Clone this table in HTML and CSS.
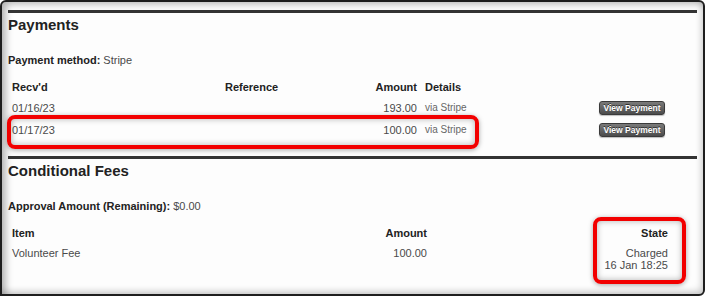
FILE: index.html
```html
<!DOCTYPE html>
<html lang="en">
<head>
<meta charset="utf-8">
<title>Payments</title>
<link rel="stylesheet" href="styles.css">
</head>
<body>
<div class="frame">
  <section class="panel">
    <h2 class="panel-title">Payments</h2>
    <p class="field"><strong>Payment method:</strong> Stripe</p>
    <div class="pay-table">
      <div class="row head">
        <span>Recv'd</span>
        <span>Reference</span>
        <span class="num">Amount</span>
        <span class="details">Details</span>
        <span></span>
      </div>
      <div class="row">
        <span>01/16/23</span>
        <span></span>
        <span class="num">193.00</span>
        <span class="details via">via Stripe</span>
        <span><button class="btn">View Payment</button></span>
      </div>
      <div class="row">
        <span>01/17/23</span>
        <span></span>
        <span class="num">100.00</span>
        <span class="details via">via Stripe</span>
        <span><button class="btn">View Payment</button></span>
      </div>
    </div>
  </section>

  <section class="panel">
    <h2 class="panel-title">Conditional Fees</h2>
    <p class="field"><strong>Approval Amount (Remaining):</strong> $0.00</p>
    <div class="fee-table">
      <div class="row head">
        <span>Item</span>
        <span class="num">Amount</span>
        <span class="num">State</span>
      </div>
      <div class="row tight">
        <span>Volunteer Fee</span>
        <span class="num">100.00</span>
        <span class="num">Charged<br>16 Jan 18:25</span>
      </div>
    </div>
  </section>

  <div class="callout callout-payment"></div>
  <div class="callout callout-state"></div>
</div>
</body>
</html>
```

FILE: styles.css
```css
* { box-sizing: border-box; }

html, body {
  margin: 0;
  padding: 0;
  background: #ffffff;
}

body {
  font-family: "Liberation Sans", Arial, sans-serif;
  font-size: 11px;
  color: #4a4a4a;
}

.frame {
  position: relative;
  width: 705px;
  height: 296px;
  border: 2px solid #1e1e1e;
  border-radius: 6px 6px 6px 0;
  padding: 8px 6px 0 6px;
  background: #fdfdfd;
  box-shadow: inset 5px 3px 7px -1px rgba(0, 0, 0, 0.28),
              inset -3px -4px 6px -1px rgba(0, 0, 0, 0.18);
  overflow: hidden;
}

.panel {
  border-top: 3px solid #333;
}

.panel + .panel {
  margin-top: 15px;
}

.panel-title {
  margin: 3px 0 0 0;
  font-size: 15px;
  line-height: 18px;
  font-weight: bold;
  color: #222;
}

.field {
  margin: 19px 0 0 0;
  line-height: 14px;
}

.field strong {
  color: #222;
}

.pay-table,
.fee-table {
  margin-top: 10px;
}

.row {
  display: grid;
  align-items: center;
  height: 22px;
  line-height: 14px;
}

.row.head {
  height: 20px;
  font-weight: bold;
  color: #222;
}

.pay-table .row {
  grid-template-columns: 213px 136px 56px 182px 66px;
  padding-left: 4px;
}

.fee-table .row {
  grid-template-columns: 315px 100px 241px;
  padding-left: 4px;
}

.fee-table .row.tight {
  height: auto;
  align-items: start;
  padding-top: 4px;
  line-height: 12px;
}

.num {
  text-align: right;
}

.details {
  padding-left: 8px;
}

.via {
  font-size: 10px;
  color: #666;
}

.btn {
  display: block;
  width: 66px;
  height: 14px;
  padding: 0;
  border: 1px solid #3a3a3a;
  border-radius: 3px;
  background: linear-gradient(#7a7a7a, #4c4c4c);
  color: #fff;
  font-family: "Liberation Sans", Arial, sans-serif;
  font-size: 8.5px;
  font-weight: bold;
  line-height: 12px;
  text-shadow: 0 -1px 0 rgba(0, 0, 0, 0.6);
  box-shadow: 0 1px 1px rgba(0, 0, 0, 0.25);
}

/* red annotation outlines drawn over the content */
.callout {
  position: absolute;
  border: 4px solid #f20000;
  border-radius: 8px;
  box-shadow: 0 1px 5px rgba(0, 0, 0, 0.35),
              inset 0 0 6px rgba(0, 0, 0, 0.3);
}

.callout-payment {
  left: 5px;
  top: 113px;
  width: 472px;
  height: 34px;
}

.callout-state {
  left: 591px;
  top: 215px;
  width: 93px;
  height: 67px;
}
```
